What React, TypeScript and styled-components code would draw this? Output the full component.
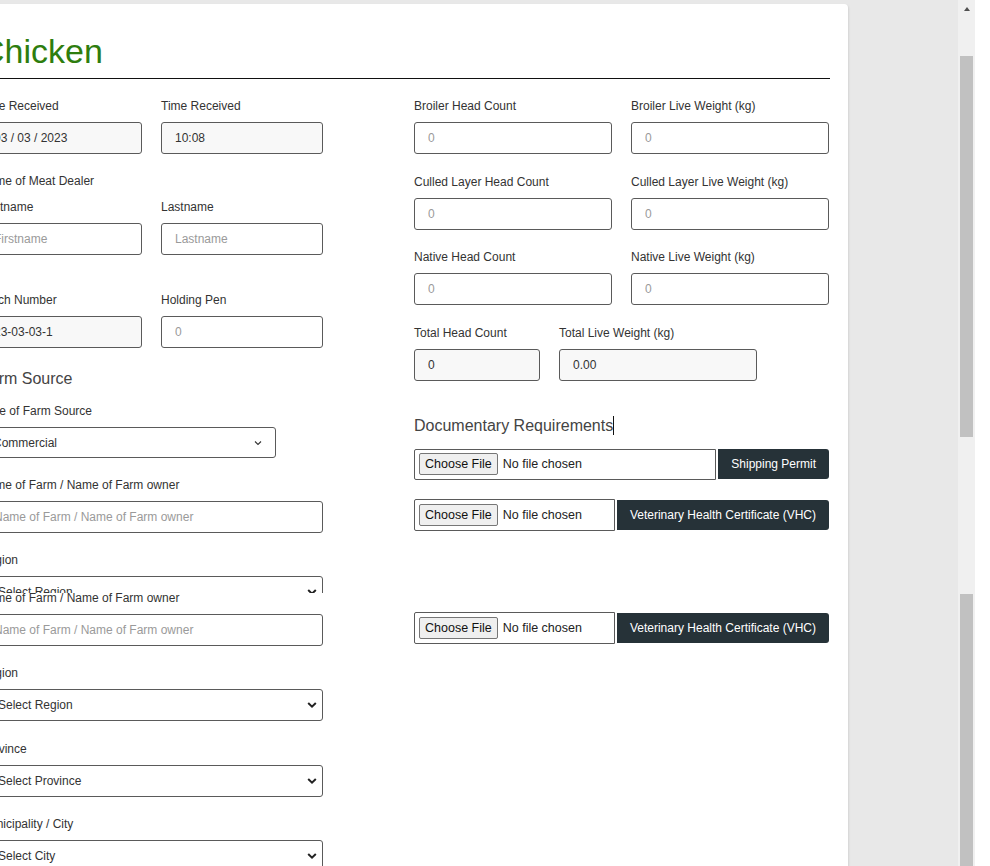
import React from "react";
import styled, { createGlobalStyle } from "styled-components";

const Global = createGlobalStyle`
  html, body { margin: 0; padding: 0; background: #e8e8e8; overflow: hidden; }
  body { font-family: "Liberation Sans", Arial, Helvetica, sans-serif; color: #333; }
  * { box-sizing: border-box; }
`;

const Screen = styled.div`
  display: flex;
  width: 990px;
  height: 866px;
  overflow: hidden;
`;

const Main = styled.div`
  flex: none;
  width: 958px;
  display: flex;
  flex-direction: column;
  background: #e8e8e8;
`;

const Slice = styled.div<{ $h: number }>`
  flex: none;
  height: ${(p) => p.$h}px;
  overflow: hidden;
`;

const Shift = styled.div<{ $y: number }>`
  margin-top: ${(p) => -p.$y}px;
`;

const Page = styled.div`
  padding-top: 4px;
`;

const Card = styled.div`
  margin-left: -38px;
  width: 886px;
  min-height: 820px;
  background: #fff;
  border-radius: 0 4px 0 0;
  box-shadow: 1px 1px 2px rgba(0, 0, 0, 0.09);
  padding: 26px 18px 40px;
`;

const Title = styled.h1`
  margin: 0 0 5px;
  font-size: 34px;
  line-height: 43px;
  font-weight: 400;
  color: #2e7d0e;
`;

const Rule = styled.hr`
  margin: 0;
  border: 0;
  border-top: 1px solid #111;
`;

const Columns = styled.div`
  display: grid;
  grid-template-columns: 343px 415px;
  column-gap: 91px;
  margin-top: 17px;
  align-items: start;
`;

const Column = styled.div`
  display: flex;
  flex-direction: column;
`;

const Row = styled.div<{ $cols: string; $mb?: number }>`
  display: grid;
  grid-template-columns: ${(p) => p.$cols};
  column-gap: 19px;
  margin-bottom: ${(p) => (p.$mb ?? 17.5)}px;
`;

const Field = styled.div<{ $w?: number; $mb?: number }>`
  display: flex;
  flex-direction: column;
  width: ${(p) => (p.$w ? `${p.$w}px` : "auto")};
  margin-bottom: ${(p) => (p.$mb ?? 0)}px;
`;

const Label = styled.label`
  display: block;
  font-size: 12px;
  line-height: 18px;
  padding-top: 1px;
  color: #333;
  margin-bottom: 7px;
  white-space: nowrap;
`;

const Input = styled.input<{ $ro?: boolean }>`
  width: 100%;
  height: 32px;
  border: 1px solid #5a5a5a;
  border-radius: 3px;
  padding: 0 13px;
  font-family: inherit;
  font-size: 12px;
  color: #333;
  background: ${(p) => (p.$ro ? "#f8f8f8" : "#fff")};
  outline: none;
  &::placeholder { color: #9a9a9a; }
`;

const SelectWrap = styled.div<{ $h?: number }>`
  position: relative;
  width: 100%;
  height: ${(p) => p.$h ?? 32}px;
`;

const Select = styled.select<{ $pl?: number }>`
  appearance: none;
  -webkit-appearance: none;
  width: 100%;
  height: 100%;
  border: 1px solid #5a5a5a;
  border-radius: 3px;
  padding: 0 12px 0 ${(p) => p.$pl ?? 12}px;
  font-family: inherit;
  font-size: 12px;
  color: #333;
  background: #fff;
  outline: none;
`;

const Chevron = styled.svg<{ $right: number }>`
  position: absolute;
  top: 50%;
  right: ${(p) => p.$right}px;
  transform: translateY(-50%);
  pointer-events: none;
`;

const Heading = styled.h3<{ $mt?: number; $mb?: number }>`
  margin: ${(p) => p.$mt ?? 0}px 0 ${(p) => p.$mb ?? 0}px;
  font-size: 16px;
  line-height: 24px;
  font-weight: 400;
  color: #444;
  white-space: nowrap;
`;

const Caret = styled.span`
  display: inline-block;
  width: 1px;
  height: 19px;
  background: #111;
  vertical-align: -4px;
`;

const FileRow = styled.div<{ $h: number; $mb?: number }>`
  display: flex;
  align-items: center;
  gap: 2px;
  height: ${(p) => p.$h}px;
  margin-bottom: ${(p) => p.$mb ?? 0}px;
`;

const FileBox = styled.div`
  flex: 1;
  height: 100%;
  display: flex;
  align-items: center;
  gap: 5px;
  padding-left: 4px;
  border: 1px solid #5a5a5a;
  border-radius: 2px 0 0 2px;
  font-size: 12.5px;
  color: #222;
  white-space: nowrap;
`;

const ChooseButton = styled.span`
  height: 22px;
  display: inline-flex;
  align-items: center;
  padding: 0 5px;
  background: #efefef;
  border: 1px solid #767676;
  border-radius: 2px;
  font-size: 12.5px;
  color: #111;
`;

const DocButton = styled.button`
  flex: none;
  height: 30px;
  padding: 0 13px;
  border: 0;
  border-radius: 0 3px 3px 0;
  background: #263238;
  color: #fff;
  font-family: inherit;
  font-size: 12px;
  white-space: nowrap;
`;

const Scrollbar = styled.div`
  flex: none;
  width: 17px;
  height: 866px;
  background: #f0f0f0;
  display: flex;
  flex-direction: column;
  align-items: center;
`;

const ArrowBox = styled.div`
  flex: none;
  height: 17px;
  width: 17px;
  display: flex;
  align-items: flex-start;
  justify-content: center;
  padding-top: 7px;
`;

const ArrowUp = styled.span`
  width: 0;
  height: 0;
  border-left: 3.5px solid transparent;
  border-right: 3.5px solid transparent;
  border-bottom: 4px solid #505050;
`;

const Gap = styled.div<{ $h: number }>`
  flex: none;
  height: ${(p) => p.$h}px;
`;

const Thumb = styled.div<{ $h: number }>`
  flex: none;
  width: 13px;
  height: ${(p) => p.$h}px;
  background: #c1c1c1;
`;

const Edge = styled.div`
  flex: none;
  width: 15px;
  height: 866px;
  background: #fff;
`;

const BoldChevron = () => (
  <Chevron $right={6} width="10" height="7" viewBox="0 0 10 7">
    <path d="M1.2 1.5 L5 5.2 L8.8 1.5" fill="none" stroke="#222" strokeWidth="2" />
  </Chevron>
);

const ThinChevron = () => (
  <Chevron $right={14} width="8" height="5" viewBox="0 0 8 5">
    <path d="M1 1 L4 4 L7 1" fill="none" stroke="#333" strokeWidth="1.1" />
  </Chevron>
);

const TextField = ({
  label,
  value,
  placeholder,
  ro,
  w,
  mb,
}: {
  label: string;
  value?: string;
  placeholder?: string;
  ro?: boolean;
  w?: number;
  mb?: number;
}) => (
  <Field $w={w} $mb={mb}>
    <Label>{label}</Label>
    <Input $ro={ro} readOnly defaultValue={value} placeholder={placeholder} />
  </Field>
);

const SelectField = ({ label, value, mb }: { label: string; value: string; mb?: number }) => (
  <Field $mb={mb}>
    <Label>{label}</Label>
    <SelectWrap>
      <Select $pl={17} defaultValue={value}>
        <option>{value}</option>
      </Select>
      <BoldChevron />
    </SelectWrap>
  </Field>
);

const FileInput = ({ doc, h, mb }: { doc: string; h: number; mb?: number }) => (
  <FileRow $h={h} $mb={mb}>
    <FileBox>
      <ChooseButton>Choose File</ChooseButton>
      <span>No file chosen</span>
    </FileBox>
    <DocButton type="button">{doc}</DocButton>
  </FileRow>
);

const FormPage = () => (
  <Page>
    <Card>
      <Title>Chicken</Title>
      <Rule />
      <Columns>
        <Column>
          <Row $cols="162px 162px" $mb={17}>
            <TextField label="Date Received" value="03 / 03 / 2023" ro />
            <TextField label="Time Received" value="10:08" ro />
          </Row>
          <Label>Name of Meat Dealer</Label>
          <Row $cols="162px 162px" $mb={35}>
            <TextField label="Firstname" placeholder="Firstname" />
            <TextField label="Lastname" placeholder="Lastname" />
          </Row>
          <Row $cols="162px 162px" $mb={19}>
            <TextField label="Batch Number" value="23-03-03-1" ro />
            <TextField label="Holding Pen" placeholder="0" />
          </Row>
          <Heading $mb={10}>Farm Source</Heading>
          <Field $w={296} $mb={17}>
            <Label>Type of Farm Source</Label>
            <SelectWrap $h={31}>
              <Select defaultValue="Commercial">
                <option>Commercial</option>
              </Select>
              <ThinChevron />
            </SelectWrap>
          </Field>
          <TextField
            label="Name of Farm / Name of Farm owner"
            placeholder="Name of Farm / Name of Farm owner"
            mb={17}
          />
          <SelectField label="Region" value="Select Region" mb={18} />
          <SelectField label="Province" value="Select Province" mb={17} />
          <SelectField label="Municipality / City" value="Select City" />
        </Column>
        <Column>
          <Row $cols="198px 198px">
            <TextField label="Broiler Head Count" placeholder="0" />
            <TextField label="Broiler Live Weight (kg)" placeholder="0" />
          </Row>
          <Row $cols="198px 198px">
            <TextField label="Culled Layer Head Count" placeholder="0" />
            <TextField label="Culled Layer Live Weight (kg)" placeholder="0" />
          </Row>
          <Row $cols="198px 198px">
            <TextField label="Native Head Count" placeholder="0" />
            <TextField label="Native Live Weight (kg)" placeholder="0" />
          </Row>
          <Row $cols="126px 198px" $mb={0}>
            <TextField label="Total Head Count" value="0" ro />
            <TextField label="Total Live Weight (kg)" value="0.00" ro />
          </Row>
          <Heading $mt={33} $mb={11}>
            Documentary Requirements
            <Caret />
          </Heading>
          <FileInput doc="Shipping Permit" h={31} mb={19} />
          <FileInput doc="Veterinary Health Certificate (VHC)" h={32} />
        </Column>
      </Columns>
    </Card>
  </Page>
);

export default function App() {
  return (
    <>
      <Global />
      <Screen>
        <Main>
          <Slice $h={593}>
            <FormPage />
          </Slice>
          <Slice $h={273}>
            <Shift $y={480}>
              <FormPage />
            </Shift>
          </Slice>
        </Main>
        <Scrollbar>
          <ArrowBox>
            <ArrowUp />
          </ArrowBox>
          <Gap $h={39} />
          <Thumb $h={381} />
          <Gap $h={157} />
          <Thumb $h={272} />
        </Scrollbar>
        <Edge />
      </Screen>
    </>
  );
}
